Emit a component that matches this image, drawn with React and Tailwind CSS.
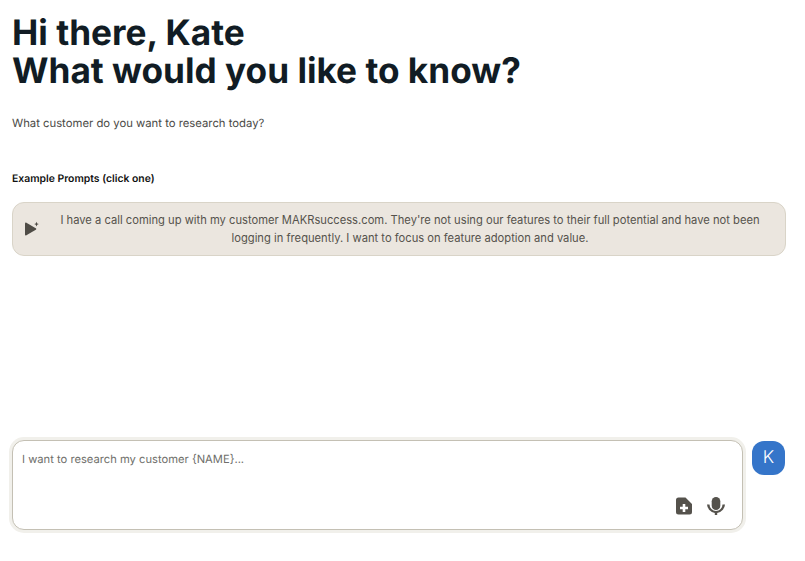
export default function App() {
  return (
    <div className="w-[805px] h-[561px] bg-white flex flex-col font-['Inter',sans-serif] overflow-hidden [text-rendering:geometricPrecision]">
      <div className="pl-3 pr-5 pt-[14px] flex flex-col flex-1">
        <h1 className="text-[35.2px] leading-[38px] font-bold text-[#111c24]">
          Hi there, Kate
          <br />
          What would you like to know?
        </h1>
        <p className="mt-[25px] text-[11.3px] leading-[16px] text-[#4a4a46]">What customer do you want to research today?</p>
        <p className="mt-[40px] text-[10.4px] leading-[16px] font-semibold text-[#111]">Example Prompts (click one)</p>
        <button className="mt-[15px] w-[774px] h-[54px] flex items-center pl-[11px] pr-[9px] rounded-[12px] bg-[#ebe6df] border border-[#d9d4c8]">
          <svg width="16" height="16" viewBox="0 0 16 16" className="shrink-0">
            <path d="M1 2.500v11c0 .8.7 1.100 1.400.7l9.400-5.400c.6-.4.6-1.200 0-1.600L2.400 1.800C1.700 1.400 1 1.700 1 2.500z" fill="#4f4c46" />
            <path d="M12.500 0.800l.7 1.600 1.600.7-1.600.7-.7 1.600-.7-1.600-1.600-.7 1.600-.7z" fill="#4f4c46" />
          </svg>
          <span className="flex-1 text-center text-[11.2px] leading-[18px] text-[#55524c] pl-1">
            I have a call coming up with my customer MAKRsuccess.com. They're not using our features to their full potential and have not been logging in frequently. I want to focus on feature adoption and value.
          </span>
        </button>
      </div>
      <div className="flex items-start pl-3 pb-[31px] gap-[9px]">
        <div className="w-[731px] h-[90px] rounded-[12px] border border-[#c4c0b4] bg-white shadow-[0_0_0_3px_#f1f0eb] flex flex-col pl-[9px] pr-[17px] pt-[10px] pb-[14px]">
          <p className="text-[11.2px] leading-[16px] text-[#6f6f6b]">I want to research my customer {'{NAME}'}...</p>
          <div className="mt-auto flex justify-end items-center gap-[14px]">
            <svg width="18" height="18" viewBox="0 0 18 18" fill="#55524c">
              <path
                fillRule="evenodd"
                d="M3.500 0.500h7L17 7v8a2.500 2.500 0 0 1-2.500 2.500h-11A2.500 2.500 0 0 1 1 15V3a2.500 2.500 0 0 1 2.500-2.500zM7.700 7v2.700H5v2.600h2.700V15h2.600v-2.700H13V9.700h-2.700V7z"
              />
            </svg>
            <svg width="18" height="18" viewBox="0 0 18 18" fill="#55524c">
              <rect x="4.700" y="0" width="8.600" height="13" rx="4.300" />
              <path d="M0 7.500h2.500a6.500 6.500 0 0 0 13 0H18a9 9 0 0 1-7.800 8.400V18H7.800v-2.100A9 9 0 0 1 0 7.500z" />
            </svg>
          </div>
        </div>
        <div className="mt-px w-[33px] h-[34px] rounded-[12px] bg-[#3575c9] text-white flex items-center justify-center text-[17.6px] font-light">K</div>
      </div>
    </div>
  );
}
